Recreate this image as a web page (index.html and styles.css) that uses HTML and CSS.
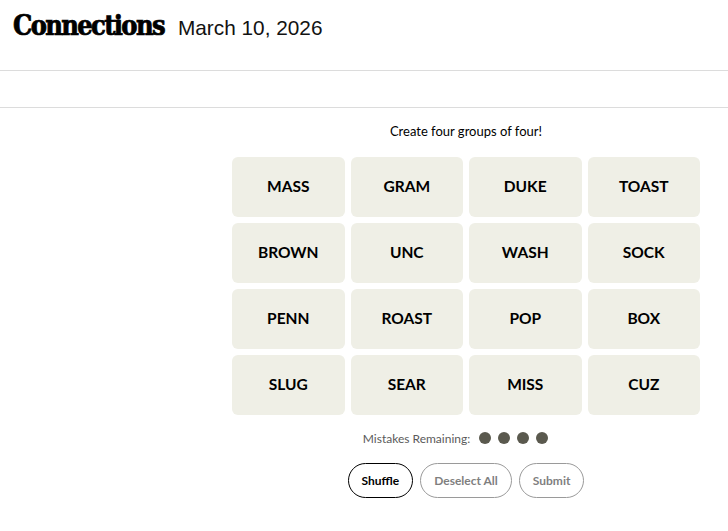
FILE: index.html
```html
<!DOCTYPE html>
<html>
<head>
<meta charset="utf-8">
<link rel="stylesheet" href="styles.css">
</head>
<body>
<header class="topbar">
  <h1 class="title">Connections</h1>
  <span class="date">March 10, 2026</span>
</header>
<div class="subbar"></div>
<main class="game">
  <p class="prompt">Create four groups of four!</p>
  <div class="grid">
    <div class="tile">MASS</div>
    <div class="tile">GRAM</div>
    <div class="tile">DUKE</div>
    <div class="tile">TOAST</div>
    <div class="tile">BROWN</div>
    <div class="tile">UNC</div>
    <div class="tile">WASH</div>
    <div class="tile">SOCK</div>
    <div class="tile">PENN</div>
    <div class="tile">ROAST</div>
    <div class="tile">POP</div>
    <div class="tile">BOX</div>
    <div class="tile">SLUG</div>
    <div class="tile">SEAR</div>
    <div class="tile">MISS</div>
    <div class="tile">CUZ</div>
  </div>
  <div class="mistakes">
    <span class="mistakes-label">Mistakes Remaining:</span>
    <span class="dots"><span class="dot"></span><span class="dot"></span><span class="dot"></span><span class="dot"></span></span>
  </div>
  <div class="actions">
    <button class="btn btn-active">Shuffle</button>
    <button class="btn">Deselect All</button>
    <button class="btn">Submit</button>
  </div>
</main>
</body>
</html>
```
FILE: styles.css
```css
* { box-sizing: border-box; }
html, body { margin: 0; padding: 0; background: #fff; }
body { font-family: Lato, "Liberation Sans", Arial, sans-serif; color: #000; }

.topbar {
  height: 71px;
  border-bottom: 1px solid #dcdcdc;
  display: flex;
  align-items: baseline;
  padding: 8px 0 0 13px;
}
.title {
  margin: 0;
  font-family: "DejaVu Serif Condensed", "DejaVu Serif", serif;
  font-weight: 900;
  font-size: 27px;
  letter-spacing: -1.65px;
  line-height: 36px;
  -webkit-text-stroke: 0.7px #000;
}
.date {
  margin-left: 14px;
  font-family: "Liberation Sans", Arial, sans-serif;
  font-size: 20.8px;
  color: #121212;
}
.subbar {
  height: 37px;
  border-bottom: 1px solid #dcdcdc;
}

.game {
  width: 468px;
  margin-left: 232px;
  display: flex;
  flex-direction: column;
  align-items: center;
}
.prompt {
  margin: 15px 0 0;
  font-family: Lato, "Liberation Sans", sans-serif;
  font-size: 13px;
  line-height: 16px;
  color: #000;
}
.grid {
  margin-top: 18px;
  width: 468px;
  display: grid;
  grid-template-columns: repeat(4, 1fr);
  grid-auto-rows: 60px;
  gap: 6px;
}
.tile {
  background: #efefe6;
  border-radius: 6px;
  display: flex;
  align-items: center;
  justify-content: center;
  padding-bottom: 3px;
  font-family: Lato, "Liberation Sans", Arial, sans-serif;
  font-weight: 700;
  font-size: 15.5px;
  color: #000;
  text-transform: uppercase;
}
.mistakes {
  margin-top: 15px;
  padding-right: 21px;
  display: flex;
  align-items: center;
  height: 16px;
}
.mistakes-label {
  font-family: Lato, "Liberation Sans", Arial, sans-serif;
  font-size: 12px;
  color: #5a5a5a;
  margin-right: 9px;
}
.dots { display: flex; gap: 7px; }
.dot {
  width: 12px;
  height: 12px;
  border-radius: 50%;
  background: #5a594e;
}
.actions {
  margin-top: 17px;
  display: flex;
  gap: 7px;
}
.btn {
  height: 35px;
  padding: 0 13px;
  border-radius: 18px;
  border: 1px solid #9a9a9a;
  background: #fff;
  font-family: Lato, "Liberation Sans", Arial, sans-serif;
  font-weight: 700;
  font-size: 12px;
  color: #7f7f7f;
}
.btn-active {
  border-color: #000;
  color: #000;
}
```
